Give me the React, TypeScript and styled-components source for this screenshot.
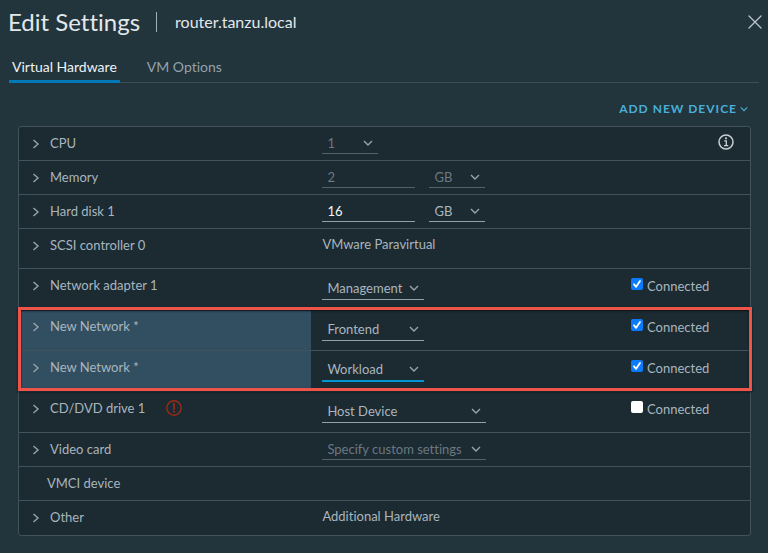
import React, { useState } from "react";
import styled, { createGlobalStyle, css } from "styled-components";

const GlobalStyle = createGlobalStyle`
  *, *::before, *::after { box-sizing: border-box; }
  body {
    margin: 0;
    min-height: 100vh;
    background: #22343c;
    color: #a9b6be;
    font-family: Lato, "Open Sans", sans-serif;
    font-size: 13px;
    line-height: 16px;
    font-variant-ligatures: none;
  }
  button, input, select {
    font: inherit;
    font-variant-ligatures: none;
    color: inherit;
  }
`;

const Dialog = styled.main`
  display: flex;
  flex-direction: column;
`;

const Header = styled.header`
  display: flex;
  align-items: center;
  height: 44px;
  padding: 0 6px 0 8px;
`;

const Title = styled.h1`
  margin: 0;
  padding-right: 16px;
  font-size: 24px;
  line-height: 28px;
  font-weight: 400;
  color: #e3e8eb;
`;

const Subtitle = styled.h2`
  margin: 0;
  font-size: 16px;
  line-height: 20px;
  padding-left: 18px;
  border-left: 1px solid #a4b0b7;
  font-weight: 400;
  color: #e3e8eb;
`;

const IconButton = styled.button`
  display: flex;
  align-items: center;
  justify-content: center;
  padding: 0;
  border: 0;
  background: none;
  cursor: pointer;
`;

const CloseButton = styled(IconButton)`
  margin-left: auto;
  color: #bcc6cc;
`;

const Tabs = styled.nav`
  display: flex;
  gap: 24px;
  margin: 8px 9px 0;
  box-shadow: inset 0 -1px #3d4e58;
`;

const Tab = styled.button<{ $active?: boolean }>`
  height: 31px;
  padding: 2px 3px 0;
  border: 0;
  border-bottom: 3px solid ${(p) => (p.$active ? "#0079b8" : "transparent")};
  background: none;
  color: ${(p) => (p.$active ? "#eef2f4" : "#94a2ab")};
  font-size: 14px;
  cursor: pointer;
`;

const Actions = styled.div`
  display: flex;
  justify-content: flex-end;
  padding: 18px 20px 0;
`;

const AddButton = styled.button`
  display: flex;
  align-items: center;
  gap: 3px;
  padding: 0;
  border: 0;
  background: none;
  color: #49afd9;
  font-size: 12px;
  font-weight: 700;
  letter-spacing: 1px;
  cursor: pointer;
`;

const Panel = styled.section`
  margin: 9px 17px 18px 18px;
  border: 1px solid #42525c;
  border-radius: 3px;
  background: #1c2a32;
`;

type Size = "short" | "medium" | "tall";
const rowHeight: Record<Size, string> = { short: "34px", medium: "40px", tall: "41px" };

const RowGrid = styled.div<{ $size: Size }>`
  display: grid;
  grid-template-columns: 40% 1fr 119px;
  min-height: ${(p) => rowHeight[p.$size]};
  border-bottom: 1px solid #42525c;
  ${Panel} > &:last-child { border-bottom: 0; }
`;

const LabelCell = styled.div<{ $highlight?: boolean; $plain?: boolean }>`
  display: flex;
  align-items: flex-start;
  gap: 9px;
  padding: 8px 0 0 ${(p) => (p.$plain ? "28px" : "12px")};
  ${(p) => p.$highlight && css`background: #324f62;`}
`;

const Expander = styled(IconButton)`
  width: 10px;
  height: 18px;
  color: #99a3a9;
`;

const Alert = styled.span`
  display: flex;
  margin-left: 12px;
  color: #9c2a17;
`;

const ValueCell = styled.div<{ $size: Size }>`
  display: flex;
  align-items: flex-start;
  gap: 14px;
  padding: ${(p) => (p.$size === "tall" ? "7px" : "5px")} 0 0 11px;
`;

const StaticText = styled.span`
  padding-top: 2px;
`;

type Tone = "normal" | "disabled" | "focused";
const lineColor: Record<Tone, string> = { normal: "#93a0a8", disabled: "#52626c", focused: "#0095d3" };

const Field = styled.span<{ $width: number; $tone: Tone; $tall?: boolean }>`
  display: flex;
  align-items: center;
  width: ${(p) => p.$width}px;
  height: ${(p) => (p.$tall ? "24px" : "22px")};
  border-bottom: ${(p) => (p.$tone === "focused" ? "2px" : "1px")} solid ${(p) => lineColor[p.$tone]};
  color: ${(p) => (p.$tone === "disabled" ? "#6a7982" : "#a9b6be")};
`;

const SelectBox = styled.select`
  grid-area: 1 / 1;
  appearance: none;
  width: 100%;
  height: 100%;
  padding: 0 0 0 5px;
  border: 0;
  outline: 0;
  background: transparent;
  opacity: 1;
  option { color: #1c2a32; }
`;

const SelectStack = styled.span`
  display: grid;
  width: 100%;
  height: 20px;
  align-items: center;
  svg {
    grid-area: 1 / 1;
    justify-self: end;
    margin-right: 5px;
    color: #99a3a9;
    pointer-events: none;
  }
`;

const TextInput = styled.input`
  width: 100%;
  height: 20px;
  padding: 0 5px;
  border: 0;
  outline: 0;
  background: transparent;
`;

const StrongInput = styled(TextInput)`
  color: #f4f7f8;
`;

const EndCell = styled.div`
  display: flex;
  align-items: flex-start;
  padding-top: 9px;
`;

const InfoButton = styled(IconButton)`
  margin: -2px 16px 0 auto;
  color: #c9d0d4;
`;

const CheckLabel = styled.label`
  display: flex;
  gap: 4px;
  cursor: pointer;
`;

const Checkbox = styled.input`
  appearance: none;
  display: grid;
  place-items: center;
  width: 12px;
  height: 12px;
  margin: 0;
  border-radius: 2px;
  background: #ffffff;
  &:checked {
    background: #0a7aff url("data:image/svg+xml,%3Csvg xmlns='http://www.w3.org/2000/svg' viewBox='0 0 12 12'%3E%3Cpath d='M3 6.3 5.1 8.8 9 2.9' fill='none' stroke='white' stroke-width='1.8' stroke-linecap='round' stroke-linejoin='round'/%3E%3C/svg%3E");
  }
`;

const MarkedGroup = styled.div`
  position: relative;
  &::after {
    content: "";
    position: absolute;
    inset: -3px -2px 1px -1px;
    border: 3px solid #ee5548;
    box-shadow: 0 1px 2px #0b1216, inset 0 1px 2px #0b1216;
    pointer-events: none;
  }
`;

const Chevron = ({ down, size = 10 }: { down?: boolean; size?: number }) => (
  <svg width={size} height={size} viewBox="0 0 10 10" fill="none" stroke="currentColor" strokeWidth="1.4" aria-hidden="true">
    <path d={down ? "M1 3 5 7 9 3" : "M2.5 1 7 5 2.5 9"} />
  </svg>
);

const CloseIcon = () => (
  <svg width="14" height="14" viewBox="0 0 14 14" fill="none" stroke="currentColor" strokeWidth="1.3" strokeLinecap="round" aria-hidden="true">
    <path d="M1 1 13 13M13 1 1 13" />
  </svg>
);

const InfoIcon = () => (
  <svg width="16" height="16" viewBox="0 0 16 16" fill="none" stroke="currentColor" aria-hidden="true">
    <circle cx="8" cy="8" r="7" strokeWidth="1.5" />
    <path d="M6.2 6.8H8.3V11.6M6 11.7H10.3" strokeWidth="1.3" />
    <circle cx="8" cy="4.3" r="1.1" fill="currentColor" stroke="none" />
  </svg>
);

const AlertIcon = () => (
  <svg width="16" height="16" viewBox="0 0 16 16" fill="none" stroke="currentColor" aria-hidden="true">
    <circle cx="8" cy="8" r="7.2" strokeWidth="1.4" />
    <path d="M8 3.6V9" strokeWidth="1.8" strokeLinecap="round" />
    <circle cx="8" cy="11.6" r="1.1" fill="currentColor" stroke="none" />
  </svg>
);

type RowProps = {
  label: string;
  size?: Size;
  highlight?: boolean;
  plain?: boolean;
  alert?: boolean;
  end?: React.ReactNode;
  children?: React.ReactNode;
};

const Row = ({ label, size = "short", highlight, plain, alert, end, children }: RowProps) => (
  <RowGrid $size={size}>
    <LabelCell $highlight={highlight} $plain={plain}>
      {!plain && (
        <Expander aria-label={`Expand ${label}`}>
          <Chevron />
        </Expander>
      )}
      <span>{label}</span>
      {alert && (
        <Alert role="img" aria-label="Device problem">
          <AlertIcon />
        </Alert>
      )}
    </LabelCell>
    <ValueCell $size={size}>{children}</ValueCell>
    <EndCell>{end}</EndCell>
  </RowGrid>
);

type SelectProps = { name: string; value: string; width: number; tone?: Tone; tall?: boolean };

const Select = ({ name, value, width, tone = "normal", tall }: SelectProps) => (
  <Field $width={width} $tone={tone} $tall={tall}>
    <SelectStack>
      <SelectBox aria-label={name} disabled={tone === "disabled"} defaultValue={value}>
        <option>{value}</option>
      </SelectBox>
      <Chevron down />
    </SelectStack>
  </Field>
);

const Connected = ({ initial = true }: { initial?: boolean }) => {
  const [on, setOn] = useState(initial);
  return (
    <CheckLabel>
      <Checkbox type="checkbox" checked={on} onChange={(e) => setOn(e.target.checked)} />
      Connected
    </CheckLabel>
  );
};

export default function App() {
  return (
    <>
      <GlobalStyle />
      <Dialog>
        <Header>
          <Title>Edit Settings</Title>
          <Subtitle>router.tanzu.local</Subtitle>
          <CloseButton aria-label="Close">
            <CloseIcon />
          </CloseButton>
        </Header>
        <Tabs>
          <Tab $active>Virtual Hardware</Tab>
          <Tab>VM Options</Tab>
        </Tabs>
        <Actions>
          <AddButton>
            ADD NEW DEVICE
            <Chevron down size={8} />
          </AddButton>
        </Actions>
        <Panel>
          <Row label="CPU" end={<InfoButton aria-label="CPU information"><InfoIcon /></InfoButton>}>
            <Select name="CPU count" value="1" width={56} tone="disabled" />
          </Row>
          <Row label="Memory">
            <Field $width={93} $tone="disabled">
              <TextInput aria-label="Memory size" defaultValue="2" />
            </Field>
            <Select name="Memory unit" value="GB" width={56} tone="disabled" />
          </Row>
          <Row label="Hard disk 1">
            <Field $width={93} $tone="normal">
              <StrongInput aria-label="Hard disk size" defaultValue="16" />
            </Field>
            <Select name="Hard disk unit" value="GB" width={56} />
          </Row>
          <Row label="SCSI controller 0" size="medium">
            <StaticText>VMware Paravirtual</StaticText>
          </Row>
          <Row label="Network adapter 1" size="tall" end={<Connected />}>
            <Select name="Network adapter 1" value="Management" width={102} tall />
          </Row>
          <MarkedGroup>
            <Row label="New Network *" size="tall" highlight end={<Connected />}>
              <Select name="First new network" value="Frontend" width={102} tall />
            </Row>
            <Row label="New Network *" size="tall" highlight end={<Connected />}>
              <Select name="Second new network" value="Workload" width={102} tone="focused" tall />
            </Row>
          </MarkedGroup>
          <Row label="CD/DVD drive 1" size="tall" alert end={<Connected initial={false} />}>
            <Select name="CD/DVD drive 1" value="Host Device" width={164} tall />
          </Row>
          <Row label="Video card">
            <Select name="Video card" value="Specify custom settings" width={164} tone="disabled" />
          </Row>
          <Row label="VMCI device" plain />
          <Row label="Other">
            <StaticText>Additional Hardware</StaticText>
          </Row>
        </Panel>
      </Dialog>
    </>
  );
}
